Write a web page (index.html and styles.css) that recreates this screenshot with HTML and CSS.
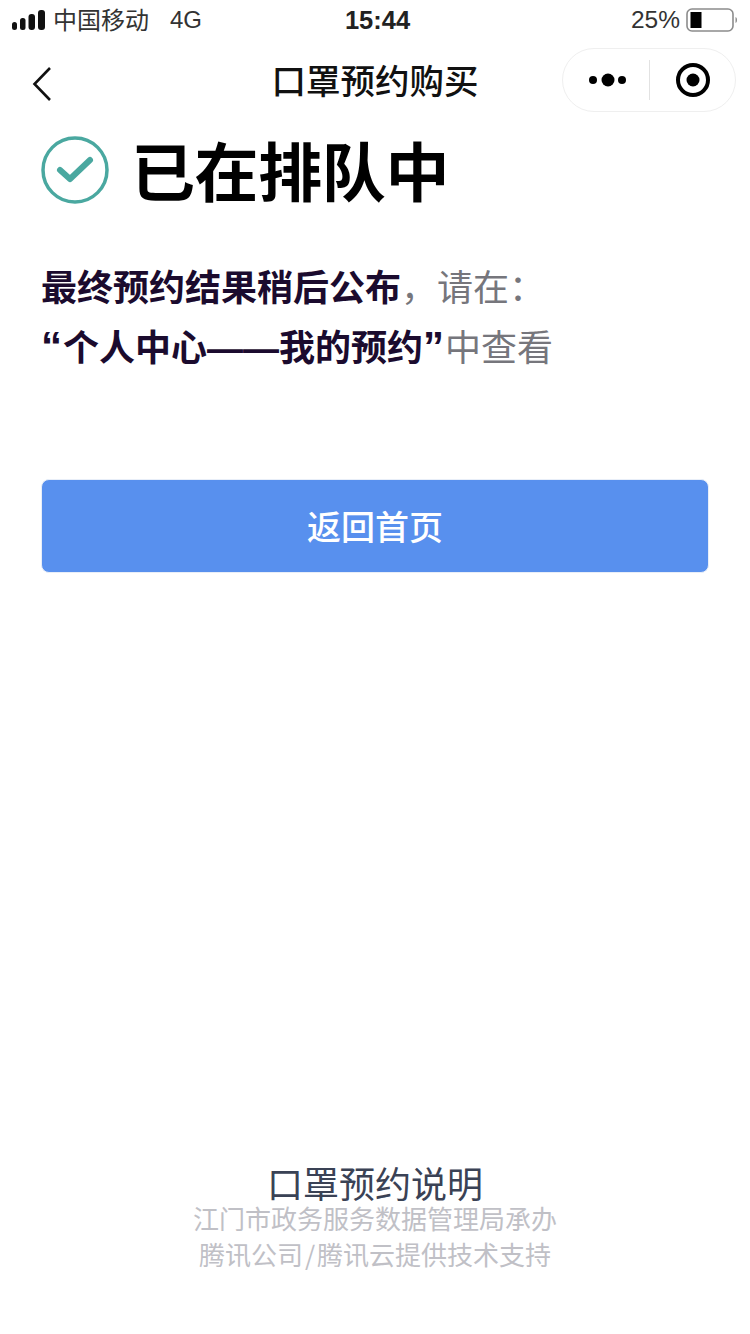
FILE: index.html
```html
<!DOCTYPE html>
<html lang="zh-CN">
<head>
<meta charset="utf-8">
<title>口罩预约购买</title>
<link rel="stylesheet" href="styles.css">
</head>
<body>
<div class="page">
  <header class="status">
    <div class="status-left">
      <svg class="signal" width="34" height="20" viewBox="0 0 34 20"><rect x="0" y="12" width="5" height="8" rx="2.500"/><rect x="8" y="8" width="5.500" height="12" rx="2.500"/><rect x="16.500" y="4" width="6.500" height="16" rx="3"/><rect x="26" y="0" width="7" height="20" rx="3"/></svg>
      <span class="carrier">中国移动</span>
      <span class="net">4G</span>
    </div>
    <div class="clock">15:44</div>
    <div class="status-right">
      <span class="pct">25%</span>
      <svg width="53" height="26" viewBox="0 0 53 26"><rect x="1" y="2" width="46" height="22" rx="5" fill="none" stroke="#8c8c8c" stroke-width="1.600"/><rect x="4.500" y="5" width="11" height="16" fill="#000"/><path d="M49.500 10c2 .6 2 5.400 0 6z" fill="#8c8c8c"/></svg>
    </div>
  </header>
  <nav class="nav">
    <svg class="back" width="24" height="36" viewBox="0 0 24 36"><path d="M18 2 2.500 18 18 34" fill="none" stroke="#111" stroke-width="2.600"/></svg>
    <h1 class="nav-title">口罩预约购买</h1>
    <div class="capsule">
      <svg class="more" width="40" height="16" viewBox="0 0 40 16"><circle cx="5" cy="8" r="4"/><circle cx="20" cy="8" r="6.500"/><circle cx="34" cy="8" r="4"/></svg>
      <span class="cap-line"></span>
      <svg class="target" width="36" height="36" viewBox="0 0 36 36"><circle cx="18" cy="18" r="15" fill="none" stroke="#000" stroke-width="4"/><circle cx="18" cy="18" r="6.500"/></svg>
    </div>
  </nav>
  <main class="main">
    <div class="result">
      <svg width="68" height="68" viewBox="0 0 68 68"><circle cx="34" cy="34" r="32" fill="none" stroke="#4aa8a0" stroke-width="3.500"/><path d="M19 34l10 9 20-19" fill="none" stroke="#4aa8a0" stroke-width="6" stroke-linecap="round" stroke-linejoin="round"/></svg>
      <h2 class="result-title">已在排队中</h2>
    </div>
    <p class="note"><strong>最终预约结果稍后公布</strong>，请在：<br><strong><span class="latin quote">“</span>个人中心<span class="latin">——</span>我的预约<span class="latin quote">”</span></strong>中查看</p>
    <button class="home-btn">返回首页</button>
  </main>
  <footer class="foot">
    <div class="foot-link">口罩预约说明</div>
    <div class="foot-line">江门市政务服务数据管理局承办</div>
    <div class="foot-line">腾讯公司<span class="slash">/</span>腾讯云提供技术支持</div>
  </footer>
</div>
</body>
</html>
```
FILE: styles.css
```css
* { box-sizing: border-box; }
html, body { margin: 0; padding: 0; background: #fff; }
body { font-family: "Noto Sans CJK SC", "Liberation Sans", sans-serif; color: #000; }
.page { width: 750px; height: 1334px; display: flex; flex-direction: column; overflow: hidden; }

.status { height: 40px; padding: 0 11px 0 12px; display: grid; grid-template-columns: 1fr auto 1fr; align-items: center; font-size: 24px; color: #222; }
.status-left { display: flex; align-items: center; }
.signal { fill: #111; margin-right: 7px; flex: none; }
.carrier { font-size: 24px; line-height: 40px; color: #333; position: relative; top: -1px; }
.net { margin-left: 21px; font-family: "Liberation Sans", sans-serif; font-size: 24px; color: #333; }
.clock { padding-left: 4px; font-family: "Liberation Sans", sans-serif; font-weight: 700; font-size: 25.500px; color: #222; }
.status-right { display: flex; align-items: center; justify-content: flex-end; gap: 6px; }
.pct { font-family: "Liberation Sans", sans-serif; font-size: 24.500px; color: #333; }

.nav { height: 72px; padding: 8px 14px 0 32px; display: flex; align-items: center; position: relative; }
.back { flex: none; margin-top: 8px; }
.nav-title { position: absolute; left: 0; right: 0; top: 7px; height: 64px; margin: 0; text-align: center; font-size: 34.500px; line-height: 64px; font-weight: 500; color: #111; }
.capsule { margin-left: auto; width: 174px; height: 64px; border: 1px solid #efefef; border-radius: 32px; display: flex; align-items: center; position: relative; background: #fff; }
.more { margin-left: 25px; flex: none; }
.cap-line { width: 1px; height: 40px; background: #e2e2e2; margin-left: 21px; flex: none; }
.target { margin-left: 25px; flex: none; }

.main { padding: 0 41px; }
.result { margin-top: 24px; height: 68px; display: flex; align-items: center; }
.result-title { margin: 0 0 4px 22px; font-size: 64px; line-height: 68px; font-weight: 700; color: #000; letter-spacing: -.4px; }
.note { margin: 51px 0 0; font-size: 36px; line-height: 60px; color: #76767c; }
.note strong { font-weight: 700; color: #1b0b2e; }
.latin { font-family: "Liberation Sans", sans-serif; font-weight: 700; }
.quote { font-size: 42px; line-height: 1; letter-spacing: 1px; }
.home-btn { display: block; width: 668px; height: 94px; margin-top: 100px; border: 1px solid #e8eef8; border-radius: 8px; background: #5890ee; color: #fff; font: 500 34px/1 "Noto Sans CJK SC", sans-serif; }

.foot { margin-top: auto; padding-bottom: 62px; text-align: center; }
.foot-link { padding-top: 8px; font-size: 36px; line-height: 36px; color: #3a4255; }
.foot-line { font-size: 26px; line-height: 36px; color: #c0c0c6; }
.slash { margin: 0 2px; }
```
